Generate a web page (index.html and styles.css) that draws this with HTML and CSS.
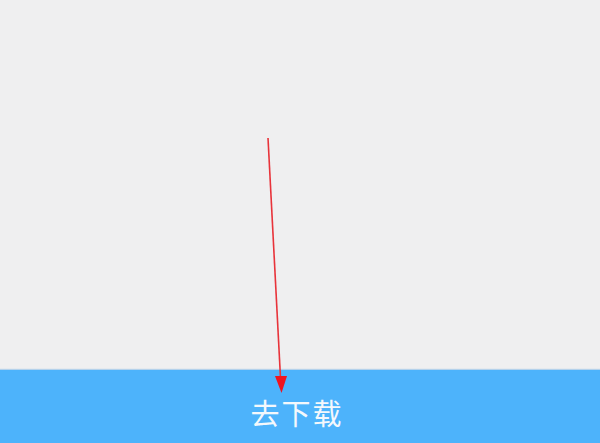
FILE: index.html
```html
<!DOCTYPE html>
<html lang="zh">
<head>
<meta charset="utf-8">
<link rel="stylesheet" href="styles.css">
</head>
<body>
<div class="page">
  <div class="content"></div>
  <div class="bar"><span class="bar-label">去下载</span></div>
  <svg class="arrow" width="600" height="443" viewBox="0 0 600 443">
    <line x1="268" y1="138" x2="280.5" y2="378" stroke="#e8333a" stroke-width="1.6"/>
    <polygon points="275,376 287,376 281.5,393" fill="#f0141e"/>
  </svg>
</div>
</body>
</html>
```

FILE: styles.css
```css
html, body {
  margin: 0;
  padding: 0;
}
body {
  background: #efeff0;
  font-family: "Noto Sans CJK SC", "Noto Sans", sans-serif;
}
.page {
  position: relative;
  width: 600px;
  height: 443px;
  display: flex;
  flex-direction: column;
  overflow: hidden;
}
.content {
  flex: 1;
  background: #efeff0;
}
.bar {
  height: 73px;
  background: #4db3fb;
  display: flex;
  align-items: center;
  justify-content: center;
  box-shadow: 0 -1px 1px rgba(120, 180, 230, 0.5);
}
.bar-label {
  color: #f4f8fc;
  font-size: 29px;
  letter-spacing: 2px;
  padding-top: 10px;
  padding-right: 6px;
}
.arrow {
  position: absolute;
  left: 0;
  top: 0;
  pointer-events: none;
}
```
